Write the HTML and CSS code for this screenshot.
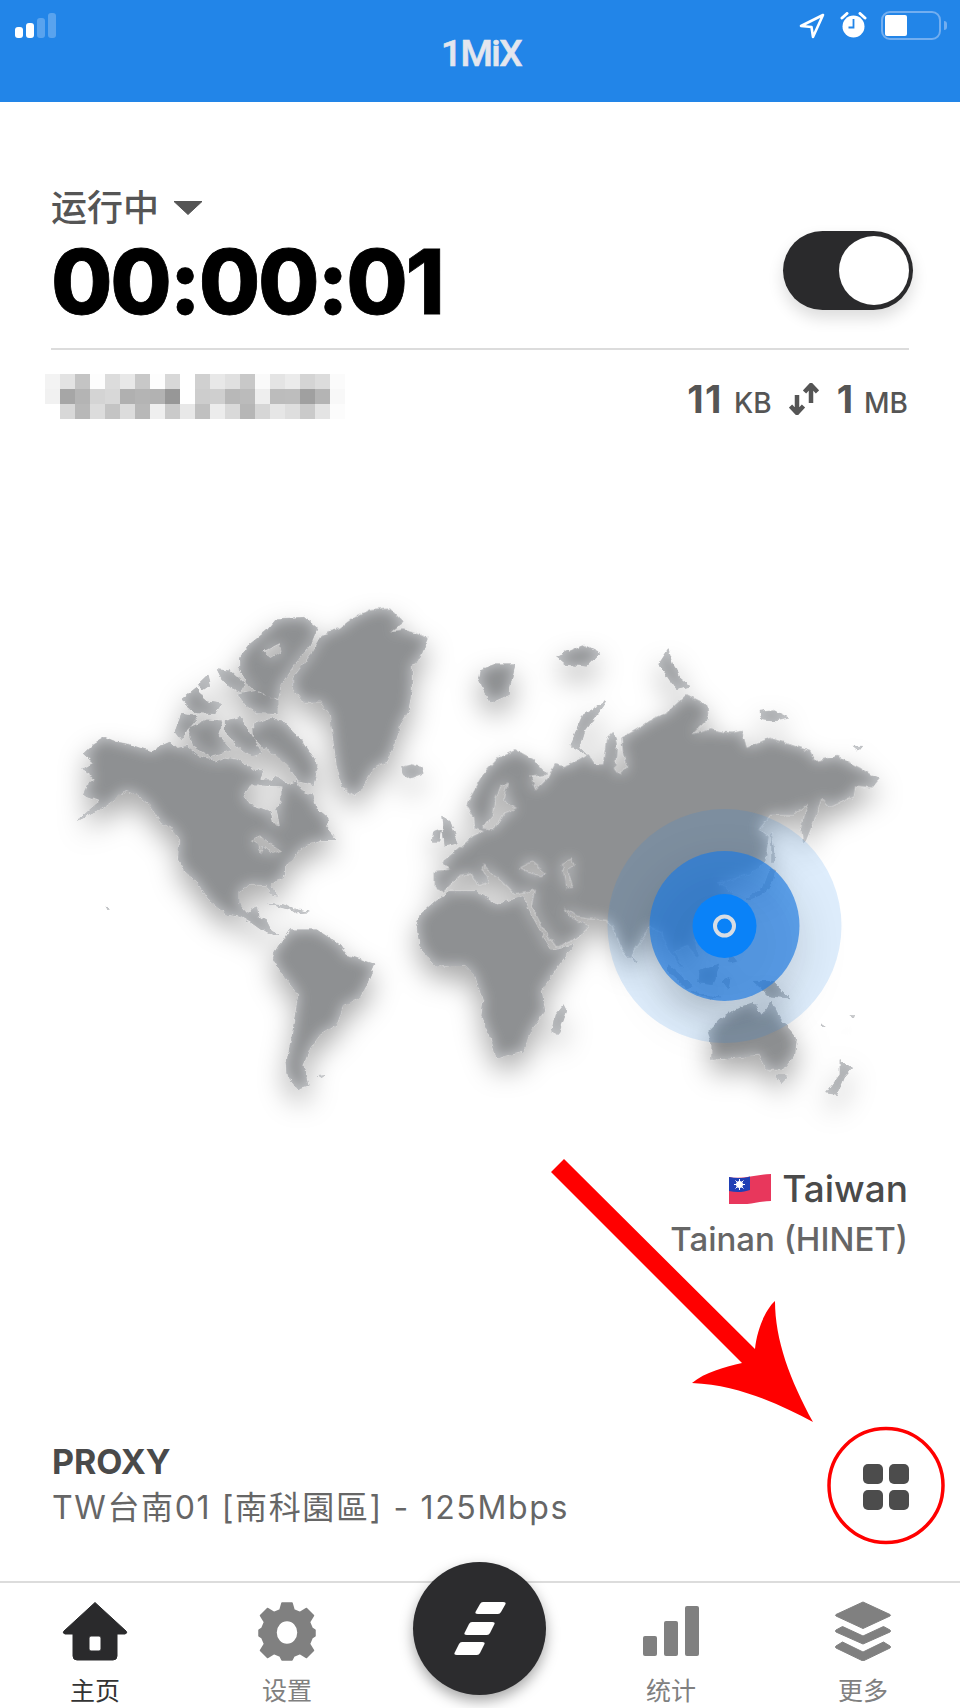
FILE: index.html
```html
<!DOCTYPE html>
<html lang="zh">
<head>
    <meta charset="utf-8">
    <title>1MiX</title>
    <link rel="stylesheet" href="styles.css">
</head>
<body>
<div class="page">
    <header class="topbar">
        <div class="signal"><span class="b1"></span><span class="b2"></span><span class="b3"></span><span class="b4"></span></div>
        <div class="brand">1MiX</div>
        <div class="sysicons">
            <svg class="ico-loc" viewBox="0 0 26 26"><path d="M24 2 L2 13 L12.5 14 L14 24 Z" fill="none" stroke="#fff" stroke-width="2.6" stroke-linejoin="round"/></svg>
            <svg class="ico-alarm" viewBox="0 0 27 26">
                <circle cx="13.5" cy="14.5" r="11" fill="#fff"/>
                <path d="M2 6 L7 1.500 M25 6 L20 1.500" stroke="#fff" stroke-width="3" stroke-linecap="round"/>
                <path d="M13.500 7 V15.500 H8.500" fill="none" stroke="#2285e8" stroke-width="1.800"/>
            </svg>
            <div class="battery"><div class="battery-body"><div class="battery-fill"></div></div><div class="battery-nub"></div></div>
        </div>
    </header>

    <section class="state">
        <div class="state-text">
            <div class="state-label">运行中
                <svg class="caret" viewBox="0 0 30 14"><path d="M1 .5 H29 L15 13.500 Z" fill="#555" stroke="#555" stroke-width="1" stroke-linejoin="round"/></svg>
            </div>
            <div class="timer">00:00:01</div>
        </div>
        <div class="toggle"><div class="knob"></div></div>
    </section>

    <section class="meta">
        <svg class="mosaic" viewBox="0 0 300 45" shape-rendering="crispEdges">
            <g>
                <rect x="0" y="0" width="15" height="15" fill="#f3f3f3"/><rect x="15" y="0" width="15" height="15" fill="#e3e3e3"/><rect x="30" y="0" width="15" height="15" fill="#c4c4c4"/><rect x="45" y="0" width="15" height="15" fill="#fdfdfd"/><rect x="60" y="0" width="15" height="15" fill="#dcdcdc"/><rect x="75" y="0" width="15" height="15" fill="#e8e8e8"/><rect x="90" y="0" width="15" height="15" fill="#c8c8c8"/><rect x="105" y="0" width="15" height="15" fill="#fdfdfd"/><rect x="120" y="0" width="15" height="15" fill="#d8d8d8"/><rect x="150" y="0" width="15" height="15" fill="#d0d0d0"/><rect x="165" y="0" width="15" height="15" fill="#e8e8e8"/><rect x="180" y="0" width="15" height="15" fill="#e0e0e0"/><rect x="195" y="0" width="15" height="15" fill="#c8c8c8"/><rect x="210" y="0" width="15" height="15" fill="#fafafa"/><rect x="225" y="0" width="15" height="15" fill="#e4e4e4"/><rect x="240" y="0" width="15" height="15" fill="#ebebeb"/><rect x="255" y="0" width="15" height="15" fill="#d4d4d4"/><rect x="270" y="0" width="15" height="15" fill="#dcdcdc"/><rect x="285" y="0" width="15" height="15" fill="#fbfbfb"/>
            </g>
            <g>
                <rect x="0" y="15" width="15" height="15" fill="#f1f1f1"/><rect x="15" y="15" width="15" height="15" fill="#a6a6a6"/><rect x="30" y="15" width="15" height="15" fill="#b4b4b4"/><rect x="45" y="15" width="15" height="15" fill="#d4d4d4"/><rect x="60" y="15" width="15" height="15" fill="#d8d8d8"/><rect x="75" y="15" width="15" height="15" fill="#b0b0b0"/><rect x="90" y="15" width="15" height="15" fill="#b4b4b4"/><rect x="105" y="15" width="15" height="15" fill="#b2b2b2"/><rect x="120" y="15" width="15" height="15" fill="#979797"/><rect x="150" y="15" width="15" height="15" fill="#cdcdcd"/><rect x="165" y="15" width="15" height="15" fill="#cfcfcf"/><rect x="180" y="15" width="15" height="15" fill="#b8b8b8"/><rect x="195" y="15" width="15" height="15" fill="#bbbbbb"/><rect x="210" y="15" width="15" height="15" fill="#eeeeee"/><rect x="225" y="15" width="15" height="15" fill="#bcbcbc"/><rect x="240" y="15" width="15" height="15" fill="#bdbdbd"/><rect x="255" y="15" width="15" height="15" fill="#a0a0a0"/><rect x="270" y="15" width="15" height="15" fill="#b4b4b4"/><rect x="285" y="15" width="15" height="15" fill="#f8f8f8"/>
            </g>
            <g>
                <rect x="15" y="30" width="15" height="15" fill="#d8d8d8"/><rect x="30" y="30" width="15" height="15" fill="#b8b8b8"/><rect x="45" y="30" width="15" height="15" fill="#dcdcdc"/><rect x="60" y="30" width="15" height="15" fill="#c4c4c4"/><rect x="75" y="30" width="15" height="15" fill="#dcdcdc"/><rect x="90" y="30" width="15" height="15" fill="#b8b8b8"/><rect x="105" y="30" width="15" height="15" fill="#efefef"/><rect x="120" y="30" width="15" height="15" fill="#cacaca"/><rect x="135" y="30" width="15" height="15" fill="#e8e8e8"/><rect x="150" y="30" width="15" height="15" fill="#c0c0c0"/><rect x="165" y="30" width="15" height="15" fill="#ececec"/><rect x="180" y="30" width="15" height="15" fill="#d9d9d9"/><rect x="195" y="30" width="15" height="15" fill="#b6b6b6"/><rect x="210" y="30" width="15" height="15" fill="#d6d6d6"/><rect x="225" y="30" width="15" height="15" fill="#e6e6e6"/><rect x="240" y="30" width="15" height="15" fill="#dedede"/><rect x="255" y="30" width="15" height="15" fill="#cacaca"/><rect x="270" y="30" width="15" height="15" fill="#e4e4e4"/><rect x="285" y="30" width="15" height="15" fill="#fcfcfc"/>
            </g>
        </svg>
        <div class="traffic">
            <span class="num first">11</span><span class="unit">KB</span>
            <svg class="updown" viewBox="0 0 30 32"><path d="M8 12 V29 M1.500 23 L8 30 L14.500 23 M22 3 V20 M15.500 9 L22 2 L28.500 9" fill="none" stroke="#555" stroke-width="4.500" stroke-linejoin="round"/></svg>
            <span class="num">1</span><span class="unit">MB</span>
        </div>
    </section>

    <section class="map">
        <svg viewBox="0 420 960 749" width="960" height="749">
            <defs>
                <filter id="land" filterUnits="userSpaceOnUse" x="0" y="420" width="960" height="749">
                    <feTurbulence type="fractalNoise" baseFrequency=".13" numOctaves="3" seed="7" result="noise"/>
                    <feDisplacementMap in="SourceGraphic" in2="noise" scale="5" xChannelSelector="R" yChannelSelector="G" result="coast"/>
                    <feGaussianBlur in="coast" stdDeviation="14" result="soft"/>
                    <feOffset in="soft" dy="13" result="moved"/>
                    <feFlood flood-color="#000" flood-opacity=".34"/>
                    <feComposite in2="moved" operator="in" result="shadow"/>
                    <feGaussianBlur in="coast" stdDeviation="7" result="inner"/>
                    <feFlood flood-color="#c8cacd"/>
                    <feComposite in2="inner" operator="out" result="glow"/>
                    <feComposite in="glow" in2="coast" operator="in" result="edge"/>
                    <feMerge>
                        <feMergeNode in="shadow"/>
                        <feMergeNode in="coast"/>
                        <feMergeNode in="edge"/>
                    </feMerge>
                </filter>
            </defs>
            <g filter="url(#land)" fill="#8e9092" stroke="#8e9092" stroke-width="1" stroke-linejoin="round" fill-rule="evenodd">
                <!-- americas, greenland -->
                <path transform="translate(50 590) scale(.3333)" d="M100,497 L128,470 L165,448 L200,462 L235,468 L270,480 L305,490 L330,475 L360,462 L380,480 L410,475 L445,505 L490,515 L495,525 L530,510 L560,515 L590,530 L610,545 L640,548 L630,575 L665,575 L680,565 L715,590 L740,580 L755,610 L785,620 L800,660 L835,690 L825,715 L860,755 L810,755 L770,770 L745,790 L730,815 L705,830 L705,860 L665,890 L680,925 L665,920 L650,890 L600,890 L565,910 L565,945 L590,975 L620,955 L625,985 L650,1000 L665,1030 L690,1040 L670,1040 L640,1030 L605,1005 L570,985 L535,980 L505,960 L480,940 L440,880 L410,860 L385,815 L388,750 L360,715 L330,700 L300,650 L260,620 L225,608 L195,635 L150,665 L85,697 L125,660 L150,640 L100,622 L110,590 L135,572 L95,545 L130,525 Z
                M580,625 L600,592 L640,592 L695,595 L695,640 L680,660 L690,712 L670,708 L660,670 L620,655 L595,650 Z
                M600,755 L630,742 L650,760 L680,775 L700,788 L665,798 L640,775 L632,800 L625,770 Z"/>
                <path transform="translate(50 590) scale(.3333)" d="M610,410 L660,390 L705,405 L755,455 L805,530 L790,590 L745,580 L720,540 L680,500 L640,480 L612,450 Z
                M375,430 L395,378 L445,385 L415,420 L395,455 Z
                M415,420 L470,395 L515,398 L505,440 L545,485 L480,505 L430,475 Z
                M525,400 L570,388 L605,440 L635,495 L600,505 L560,475 L525,430 Z
                M393,335 L440,298 L465,340 L515,348 L495,378 L440,375 L408,348 Z
                M505,245 L540,248 L585,290 L572,312 L528,292 Z
                M565,320 L620,308 L685,338 L685,378 L620,375 L588,352 Z
                M568,210 L600,168 L650,128 L680,92 L762,88 L802,120 L782,170 L732,230 L692,290 L685,332 L630,318 L588,282 L568,240 Z
                M640,190 L690,165 L695,190 L665,210 Z
                M445,290 L475,262 L482,290 L460,305 Z
                M650,945 L700,950 L750,970 L700,960 Z
                M725,962 L775,972 L740,975 Z
                M165,955 L178,965 L172,968 Z
                M805,1465 L828,1463 L815,1472 Z"/>
                <path transform="translate(50 590) scale(.3333)" d="M730,270 L790,190 L820,140 L870,120 L910,90 L960,65 L1020,60 L1060,100 L1020,130 L1060,125 L1135,150 L1110,210 L1085,230 L1085,300 L1075,370 L1050,410 L1040,450 L1010,520 L970,540 L930,610 L915,620 L880,600 L860,530 L850,450 L840,380 L810,340 L760,340 L730,300 Z
                M1052,540 L1085,530 L1120,540 L1115,560 L1080,573 L1060,560 Z"/>
                <path transform="translate(50 590) scale(.3333)" d="M675,1090 L720,1025 L800,1025 L870,1070 L890,1100 L975,1130 L950,1190 L930,1230 L880,1250 L860,1310 L810,1340 L780,1380 L760,1430 L775,1495 L745,1505 L715,1470 L710,1420 L725,1350 L745,1220 L690,1150 L670,1110 Z"/>
                <!-- eurasia -->
                <path transform="translate(400 600) scale(.3333)" d="M105,820 L150,815 L130,790 L185,745 L220,715 L250,700 L225,690 L220,660 L200,625 L215,590 L250,530 L300,475 L345,455 L400,485 L440,530 L390,535 L410,575 L445,540 L465,500 L490,505 L530,490 L565,470 L585,500 L610,500 L620,420 L640,400 L650,440 L645,510 L660,530 L685,505 L670,465 L665,420 L710,395 L745,370 L800,345 L860,290 L920,320 L925,360 L875,410 L930,395 L990,405 L1025,400 L1040,450 L1110,420 L1170,440 L1230,460 L1245,490 L1310,475 L1380,510 L1435,545 L1415,570 L1365,565 L1360,595 L1290,625 L1265,600 L1240,670 L1212,738 L1205,690 L1225,615 L1180,650 L1110,650 L1075,695 L1105,715 L1095,790 L1050,825 L1000,840 L950,855 L980,870 L1000,895 L965,905 L925,960 L890,990 L885,1040 L895,1075 L860,1040 L835,1050 L820,1060 L850,1110 L810,1060 L785,1000 L750,985 L700,1060 L690,1080 L665,1050 L640,985 L620,965 L565,960 L530,955 L490,925 L510,960 L545,975 L565,985 L530,1020 L470,1045 L430,990 L397,925 L405,875 L345,885 L310,850 L275,825 L250,795 L245,810 L265,850 L235,860 L215,825 L180,830 L130,880 L105,870 Z
                M355,810 L395,790 L440,825 L420,835 L385,825 Z
                M485,795 L515,780 L525,800 L505,815 L520,870 L497,870 L490,830 Z
                M300,565 L325,552 L312,605 L355,630 L312,648 L285,695 L245,692 L278,650 L285,605 Z"/>
                <!-- africa -->
                <path transform="translate(400 600) scale(.3333)" d="M50,980 L60,950 L110,905 L150,880 L230,880 L290,920 L370,895 L382,930 L420,1000 L455,1055 L520,1040 L470,1110 L425,1180 L435,1240 L390,1300 L370,1360 L290,1380 L270,1310 L245,1250 L250,1210 L225,1130 L195,1100 L110,1105 L60,1050 Z
                M490,1220 L500,1240 L475,1310 L455,1300 L465,1250 Z"/>
                <!-- islands, oceania -->
                <path transform="translate(400 600) scale(.3333)" d="M510,440 L550,350 L620,310 L610,325 L555,400 L540,450 L560,470 L520,450 Z
                M125,655 L150,670 L175,735 L135,745 L130,710 Z
                M100,705 L125,695 L120,730 L97,730 Z
                M240,215 L280,200 L345,200 L325,290 L270,315 L235,240 Z
                M470,175 L550,140 L600,165 L560,205 L500,200 Z
                M775,200 L805,155 L835,235 L870,265 L830,275 L800,230 Z
                M1080,340 L1120,335 L1170,360 L1120,370 L1085,365 Z
                M695,1075 L712,1095 L700,1095 Z
                M805,1100 L880,1165 L860,1170 L805,1120 Z
                M900,1120 L960,1095 L940,1160 L895,1155 Z
                M870,1180 L960,1200 L920,1197 Z
                M965,1150 L990,1140 L985,1175 Z
                M985,1060 L1010,1090 L990,1095 Z
                M1060,1150 L1120,1150 L1170,1200 L1110,1195 Z
                M925,1300 L960,1265 L1010,1230 L1060,1215 L1085,1250 L1115,1210 L1140,1260 L1190,1320 L1185,1370 L1150,1415 L1100,1415 L1075,1370 L1000,1380 L935,1385 L935,1340 Z
                M1130,1430 L1160,1430 L1145,1460 Z
                M1320,1385 L1355,1410 L1330,1440 L1310,1490 L1280,1485 L1320,1430 Z
                M1035,905 L1090,870 L1110,815 L1125,820 L1110,870 L1060,900 Z
                M1115,705 L1125,790 L1115,790 Z
                M1360,445 L1385,445 L1375,457 Z
                M1265,1275 L1280,1285 L1270,1285 Z
                M1350,1250 L1365,1250 L1355,1257 Z"/>
            </g>
            <!-- location pulse -->
            <circle cx="724.500" cy="928" r="117" fill="#2285e8" fill-opacity=".15"/>
            <circle class="pulse-mid" cx="724.500" cy="928" r="75" fill="#1f7ae0" fill-opacity=".68"/>
            <circle cx="724.500" cy="928" r="32" fill="#0a82f8"/>
            <circle cx="724.500" cy="928" r="9.500" fill="none" stroke="#d8dde4" stroke-width="4"/>
        </svg>
    </section>

    <section class="place">
        <div class="country">
            <svg class="flag" viewBox="0 0 42 30">
                <path d="M0 3 C14 6 27 0 42 0 V27 C27 27 14 33 0 30 Z" fill="#e8375c"/>
                <path d="M0 3 C8 5 15 4 21 2.500 V16 C15 18 8 19 0 17 Z" fill="#1f3fb5"/>
                <circle cx="10.500" cy="10.500" r="3.500" fill="#fff"/>
                <path d="M10.500 5 V16 M5 10.500 H16 M6.500 6.500 L14.500 14.500 M14.500 6.500 L6.500 14.500" stroke="#fff" stroke-width="1"/>
            </svg>
            Taiwan
        </div>
        <div class="city">Tainan (HINET)</div>
    </section>

    <section class="proxy">
        <div>
            <div class="proxy-kind">PROXY</div>
            <div class="proxy-name">TW台南01 [南科園區] - 125Mbps</div>
        </div>
        <div class="grid-btn"><span></span><span></span><span></span><span></span></div>
    </section>

    <nav class="tabbar">
        <div class="tab active">
            <svg viewBox="0 0 66 60"><path d="M33 1.500 L64 30 Q66 32 63 33 H55 V55 Q55 59 51 59 H15 Q11 59 11 55 V33 H3 Q0 32 2 30 Z M27 37 Q27 35 29 35 H37 Q39 35 39 37 V48 Q39 50 37 50 H29 Q27 50 27 48 Z" fill="#2a2a2c" fill-rule="evenodd" stroke="#2a2a2c" stroke-width="1" stroke-linejoin="round"/></svg>
            <span>主页</span>
        </div>
        <div class="tab">
            <svg viewBox="0 0 66 60"><path fill="#808080" fill-rule="evenodd" d="M28 2 H38 L40 9 L46 11.500 L52.500 7.500 L59.500 14.500 L55.500 21 L58 27 L61 29 V35 L58 37 L55.500 43 L59.500 49.500 L52.500 56.500 L46 52.500 L40 55 L38 59 H28 L26 55 L20 52.500 L13.500 56.500 L6.500 49.500 L10.500 43 L8 37 L5 35 V29 L8 27 L10.500 21 L6.500 14.500 L13.500 7.500 L20 11.500 L26 9 Z M33 19.500 A11 12 0 1 0 33 43.500 A11 12 0 1 0 33 19.500 Z" stroke="#808080" stroke-width="1.500" stroke-linejoin="round"/></svg>
            <span>设置</span>
        </div>
        <div class="fab">
            <svg viewBox="0 0 133 133"><path d="M67 42 Q68 40 70 40 H90 Q94 40 92 43 L88 50 Q87 52 85 52 H65 Q61 52 63 49 Z M56 62 Q57 60 59 60 H79 Q83 60 81 63 L77 71 Q76 73 74 73 H54 Q50 73 52 70 Z M46 82 Q47 80 49 80 H69 Q73 80 71 83 L67 91 Q66 93 64 93 H44 Q40 93 42 90 Z" fill="#fff"/></svg>
        </div>
        <div class="tab">
            <svg viewBox="0 0 66 60"><rect x="5" y="35" width="14" height="20" rx="2" fill="#808080"/><rect x="26" y="20" width="14" height="35" rx="2" fill="#808080"/><rect x="47" y="5" width="14" height="50" rx="2" fill="#808080"/></svg>
            <span>统计</span>
        </div>
        <div class="tab">
            <svg viewBox="0 0 66 60"><path fill="#808080" stroke="#808080" stroke-width="1" stroke-linejoin="round" d="M33 1 L60 13.500 Q61 14 60 15 L33 27.500 L6 15 Q5 14 6 13.500 Z M12.500 25.500 L33 35 L53.500 25.500 L60 29 Q61 30 60 31 L33 43 L6 31 Q5 30 6 29 Z M12.500 41 L33 51 L53.500 41 L60 45 Q61 46 60 47 L33 60 L6 47 Q5 46 6 45 Z"/></svg>
            <span>更多</span>
        </div>
    </nav>

    <!-- annotation drawn over the screenshot -->
    <svg class="callout" viewBox="0 0 960 1708">
        <path d="M564 1159 L755 1349 C757 1330 765 1310 775 1301 C775 1340 790 1380 813 1422 C780 1405 740 1385 692 1383 C705 1372 725 1367 742 1363 L551 1172 Z" fill="#f00"/>
        <circle cx="886" cy="1485.500" r="57" fill="none" stroke="#f00" stroke-width="3.500"/>
    </svg>
</div>
</body>
</html>
```

FILE: styles.css
```css
html, body {
    margin: 0;
    padding: 0;
    background: #fff;
}
.page {
    position: relative;
    width: 960px;
    height: 1708px;
    overflow: hidden;
    display: flex;
    flex-direction: column;
    font-family: Inter, "Noto Sans CJK SC", sans-serif;
    color: #555;
}

/* top bar */
.topbar {
    height: 102px;
    flex: none;
    box-sizing: border-box;
    padding: 0 13px 0 15px;
    background: #2285e8;
    display: grid;
    grid-template-columns: 1fr auto 1fr;
    align-items: start;
}
.signal {
    display: flex;
    align-items: flex-end;
    gap: 3px;
    height: 25px;
    margin-top: 13px;
}
.signal span {
    width: 8px;
    border-radius: 3px;
    background: #fff;
}
.signal .b1 { height: 11px; }
.signal .b2 { height: 15px; }
.signal .b3 { height: 20px; background: rgba(255,255,255,.25); }
.signal .b4 { height: 25px; background: rgba(255,255,255,.25); }
.brand {
    font-family: Roboto, sans-serif;
    font-weight: 500;
    font-size: 37px;
    line-height: 44px;
    margin-top: 32px;
    color: #e3e6ee;
    letter-spacing: -1.5px;
    -webkit-text-stroke: .6px #e3e6ee;
}
.sysicons {
    display: flex;
    justify-content: flex-end;
    align-items: flex-start;
    margin-top: 11px;
}
.ico-loc {
    width: 26px;
    height: 26px;
    margin-top: 2px;
}
.ico-alarm {
    width: 27px;
    height: 26px;
    margin: 1px 14px 0 15px;
}
.battery {
    display: flex;
    align-items: center;
    gap: 3px;
}
.battery-body {
    width: 60px;
    height: 29px;
    box-sizing: border-box;
    border: 2px solid #72aef0;
    border-radius: 9px;
    padding: 2px;
}
.battery-fill {
    width: 22px;
    height: 100%;
    background: #fff;
    border-radius: 2px;
}
.battery-nub {
    width: 3px;
    height: 9px;
    border-radius: 0 3px 3px 0;
    background: #72aef0;
}

/* running state */
.state {
    flex: none;
    display: flex;
    justify-content: space-between;
    align-items: flex-start;
    margin: 0 47px 0 51px;
    padding-top: 86px;
}
.state-label {
    display: flex;
    align-items: center;
    gap: 14px;
    font-size: 36px;
    font-weight: 500;
    line-height: 40px;
    color: #555;
}
.caret {
    width: 30px;
    height: 14px;
}
.timer {
    font-weight: 800;
    font-size: 89px;
    line-height: 90px;
    margin-top: 9px;
    margin-bottom: 21px;
    letter-spacing: -2.3px;
    color: #000;
    -webkit-text-stroke: .8px #000;
}
.toggle {
    width: 130px;
    height: 79px;
    margin-top: 43px;
    box-sizing: border-box;
    padding: 5px 4px;
    display: flex;
    justify-content: flex-end;
    background: #2a2a2c;
    border-radius: 40px;
    box-shadow: 0 8px 16px rgba(0,0,0,.14);
}
.knob {
    width: 70px;
    height: 69px;
    border-radius: 50%;
    background: #fff;
}

/* address + traffic */
.meta {
    flex: none;
    height: 70px;
    box-sizing: border-box;
    margin: 0 51px;
    padding-top: 25px;
    border-top: 2px solid #dcdcdc;
    display: flex;
    justify-content: space-between;
    align-items: center;
}
.mosaic {
    width: 300px;
    height: 45px;
    margin-left: -6px;
}
.traffic {
    display: flex;
    align-items: baseline;
    margin: 4px 1px 0 0;
    color: #555;
}
.num {
    font-size: 38px;
    font-weight: 700;
}
.num.first {
    letter-spacing: 1.5px;
}
.unit {
    font-size: 28px;
    font-weight: 500;
    margin-left: 11px;
}
.updown {
    width: 30px;
    height: 32px;
    margin: 0 18px 0 17px;
    align-self: center;
}

.map {
    flex: none;
    height: 749px;
}
.map svg {
    display: block;
}
.pulse-mid {
    filter: drop-shadow(0 18px 24px rgba(0,0,0,.22));
}

/* selected place */
.place {
    flex: none;
    padding-right: 52px;
    text-align: right;
}
.country {
    display: flex;
    justify-content: flex-end;
    align-items: center;
    gap: 11px;
    font-size: 37px;
    font-weight: 500;
    line-height: 44px;
    color: #4a4a4a;
}
.flag {
    width: 42px;
    height: 30px;
}
.city {
    font-size: 33px;
    font-weight: 500;
    line-height: 40px;
    margin-top: 8px;
    color: #666;
}

/* proxy row */
.proxy {
    flex: none;
    margin: auto 51px 53px 52px;
    display: flex;
    justify-content: space-between;
    align-items: flex-start;
}
.proxy-kind {
    font-size: 34px;
    font-weight: 700;
    line-height: 36px;
    color: #4a4a4a;
}
.proxy-name {
    font-size: 32px;
    line-height: 40px;
    margin-top: 8px;
    letter-spacing: 1.63px;
    color: #666;
}
.grid-btn {
    display: grid;
    grid-template-columns: 20px 20px;
    grid-auto-rows: 20px;
    gap: 6px;
    margin-top: 20px;
}
.grid-btn span {
    background: #4c4c4c;
    border-radius: 5px;
}

/* bottom tabs */
.tabbar {
    flex: none;
    height: 127px;
    margin-left: -1px;
    box-sizing: border-box;
    border-top: 2px solid #dcdcdc;
    display: grid;
    grid-template-columns: repeat(5, 192px);
}
.tab {
    display: flex;
    flex-direction: column;
    align-items: center;
    padding-top: 18px;
    color: #808080;
    font-size: 25px;
    line-height: 30px;
}
.tab svg {
    width: 66px;
    height: 60px;
    margin-bottom: 15px;
}
.tab.active {
    color: #333;
}
.fab {
    width: 133px;
    height: 133px;
    margin-top: -21px;
    justify-self: center;
    border-radius: 50%;
    background: #2c2c2e;
    box-shadow: 0 6px 14px rgba(0,0,0,.35);
}
.fab svg {
    display: block;
    width: 133px;
    height: 133px;
}

.callout {
    position: absolute;
    left: 0;
    top: 0;
    width: 960px;
    height: 1708px;
    pointer-events: none;
}
```
